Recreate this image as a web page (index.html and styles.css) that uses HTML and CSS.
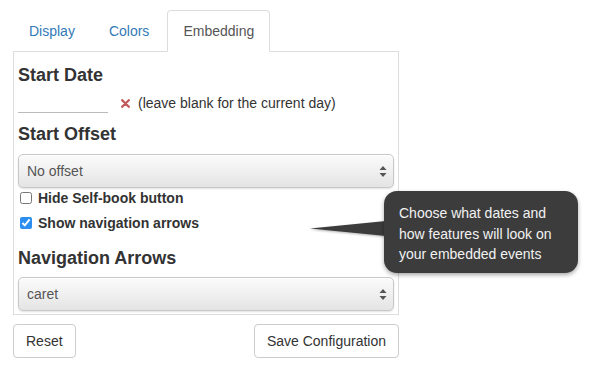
FILE: index.html
```html
<!DOCTYPE html>
<html lang="en">
<head>
    <meta charset="UTF-8">
    <title>Embed Configuration</title>
    <link rel="stylesheet" href="styles.css">
</head>
<body>
    <div class="wrap">
        <ul class="nav-tabs">
            <li><a href="#">Display</a></li>
            <li><a href="#">Colors</a></li>
            <li class="active"><a href="#">Embedding</a></li>
        </ul>

        <div class="tab-panel">
            <h3 class="first">Start Date</h3>
            <div class="date-row">
                <input type="text" class="date-input">
                <svg class="clear-icon" width="9" height="9" viewBox="0 0 9 9">
                    <path d="M1.2 1.2 L7.8 7.8 M7.8 1.2 L1.2 7.8" stroke="#c25a5c" stroke-width="2.3" stroke-linecap="round"/>
                </svg>
                <span class="hint">(leave blank for the current day)</span>
            </div>

            <h3>Start Offset</h3>
            <div class="select-wrap">
                <select class="form-select">
                    <option>No offset</option>
                </select>
                <svg class="select-caret" width="8" height="13" viewBox="0 0 8 13">
                    <path d="M4 1 L7.5 5 L0.5 5 Z M4 12 L7.5 8 L0.5 8 Z" fill="#555"/>
                </svg>
            </div>

            <label class="check-row"><input type="checkbox"> Hide Self-book button</label>
            <label class="check-row"><input type="checkbox" checked> Show navigation arrows</label>

            <h3 class="nav-heading">Navigation Arrows</h3>
            <div class="select-wrap">
                <select class="form-select">
                    <option>caret</option>
                </select>
                <svg class="select-caret" width="8" height="13" viewBox="0 0 8 13">
                    <path d="M4 1 L7.5 5 L0.5 5 Z M4 12 L7.5 8 L0.5 8 Z" fill="#555"/>
                </svg>
            </div>
        </div>

        <div class="button-row">
            <button class="btn">Reset</button>
            <button class="btn">Save Configuration</button>
        </div>

        <!-- help bubble -->
        <svg class="tip-tail" width="80" height="24" viewBox="0 0 80 24">
            <polygon points="2,10.5 78,3 78,18" fill="#3c3c3c"/>
        </svg>
        <div class="tip">
            Choose what dates and<br>
            how features will look on<br>
            your embedded events
        </div>
    </div>
</body>
</html>
```

FILE: styles.css
```css
body {
    margin: 0;
    font-family: "Liberation Sans", Arial, sans-serif;
    color: #333;
    background: #fff;
}
.wrap {
    position: relative;
    width: 386px;
    margin: 10px 13px;
}
.nav-tabs {
    display: flex;
    list-style: none;
    margin: 0;
    padding: 0;
    border-bottom: 1px solid #ddd;
}
.nav-tabs li {
    margin-right: 2px;
    margin-bottom: -1px;
}
.nav-tabs a {
    display: block;
    padding: 10px 15px;
    font-size: 14px;
    line-height: 20px;
    color: #337ab7;
    text-decoration: none;
    border: 1px solid transparent;
    border-radius: 4px 4px 0 0;
}
.nav-tabs .active a {
    color: #555;
    background: #fff;
    border-color: #ddd;
    border-bottom-color: #fff;
}
.tab-panel {
    border: 1px solid #ddd;
    border-top: none;
    padding: 13px 4px 3px 4px;
}
h3 {
    margin: 13px 0 0 0;
    font-size: 18px;
    line-height: 20px;
    font-weight: bold;
    color: #333;
}
h3.first {
    margin-top: 0;
}
.date-row {
    display: flex;
    align-items: center;
    height: 24px;
    margin-top: 6px;
}
.date-input {
    width: 90px;
    height: 22px;
    box-sizing: border-box;
    border: none;
    border-bottom: 1px solid #bbb;
    padding: 0;
    outline: none;
    align-self: flex-start;
}
.clear-icon {
    margin: 0 8px 0 13px;
}
.hint {
    font-size: 14px;
}
.date-row + h3 {
    margin-top: 9px;
}
.select-wrap {
    position: relative;
    margin-top: 10px;
}
.form-select {
    display: block;
    width: 100%;
    height: 34px;
    -webkit-appearance: none;
    appearance: none;
    border: 1px solid #c8c8c8;
    border-radius: 5px;
    padding: 0 8px;
    font-family: inherit;
    font-size: 14px;
    color: #555;
    background: linear-gradient(#fbfbfb, #f0f0f0 50%, #e4e4e4);
    box-shadow: 0 1px 2px rgba(0,0,0,0.12), inset 0 1px 0 #fff;
}
.select-caret {
    position: absolute;
    right: 7px;
    top: 11px;
    pointer-events: none;
}
.check-row {
    display: flex;
    align-items: center;
    height: 18px;
    margin-top: 1px;
    font-size: 14px;
    font-weight: bold;
}
.check-row + .check-row {
    margin-top: 7px;
}
.check-row input {
    width: 12px;
    height: 12px;
    margin: 0 6px 0 2px;
    accent-color: #2b8ef0;
}
.nav-heading {
    margin-top: 16px;
}
.nav-heading + .select-wrap {
    margin-top: 9px;
}
.button-row {
    display: flex;
    justify-content: space-between;
    margin-top: 9px;
}
.btn {
    height: 34px;
    padding: 0 12px;
    font-family: inherit;
    font-size: 14px;
    color: #333;
    background: #fff;
    border: 1px solid #ccc;
    border-radius: 4px;
}
.tip {
    position: absolute;
    left: 371px;
    top: 181px;
    width: 194px;
    height: 82px;
    box-sizing: border-box;
    padding: 12px 0 0 15px;
    background: #3c3c3c;
    color: #f2f2f2;
    font-size: 14px;
    line-height: 20.5px;
    white-space: nowrap;
    border-radius: 13px;
    box-shadow: 0 2px 4px rgba(0,0,0,0.35);
}
.tip-tail {
    position: absolute;
    left: 295px;
    top: 208px;
    filter: drop-shadow(0 1px 1px rgba(0,0,0,0.3));
}
```
